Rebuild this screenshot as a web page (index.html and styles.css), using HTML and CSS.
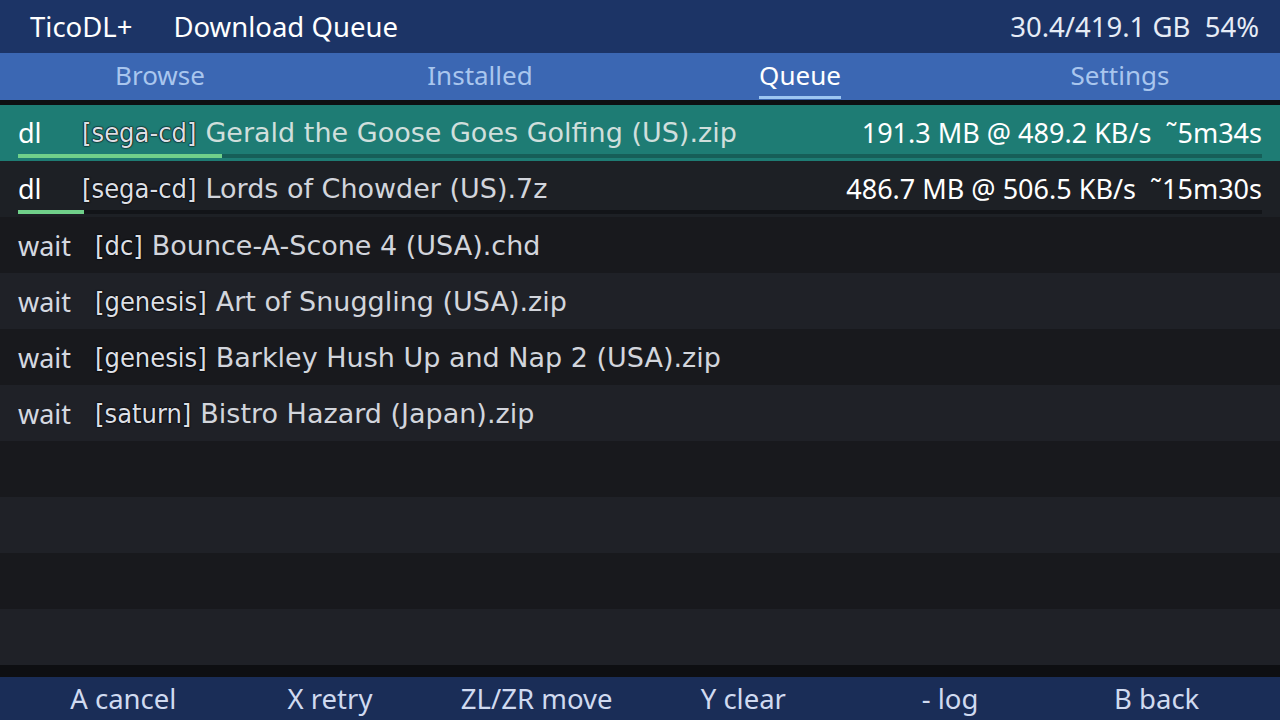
FILE: index.html
```html
<!DOCTYPE html>
<html lang="en">
<head>
  <meta charset="UTF-8" />
  <meta name="viewport" content="width=device-width, initial-scale=1.0">
  <title>TicoDL+ Download Queue</title>
  <link rel="stylesheet" href="styles.css">
</head>
<body>

<div id="app">
  <div class="topbar">
    <span class="brand">TicoDL+</span>
    <span class="title">Download Queue</span>
    <span class="storage">30.4/419.1 GB&nbsp;&nbsp;54%</span>
  </div>

  <div class="tabs">
    <div class="tab"><span>Browse</span></div>
    <div class="tab"><span>Installed</span></div>
    <div class="tab active"><span>Queue</span></div>
    <div class="tab"><span>Settings</span></div>
  </div>
  <div class="divider"></div>

  <div class="queue">
    <div class="row dl selected">
      <div class="line">
        <span class="status st-dl">dl</span>
        <span class="tag">[sega-cd]</span>
        <span class="name">Gerald the Goose Goes Golfing (US).zip</span>
        <span class="stats">191.3 MB @ 489.2 KB/s&nbsp;&nbsp;˜5m34s</span>
      </div>
      <div class="bar"><div class="fill" style="width: 16.4%"></div></div>
    </div>
    <div class="row dl">
      <div class="line">
        <span class="status st-dl">dl</span>
        <span class="tag">[sega-cd]</span>
        <span class="name">Lords of Chowder (US).7z</span>
        <span class="stats">486.7 MB @ 506.5 KB/s&nbsp;&nbsp;˜15m30s</span>
      </div>
      <div class="bar"><div class="fill" style="width: 5.3%"></div></div>
    </div>
    <div class="row">
      <div class="line">
        <span class="status st-wait">wait</span>
        <span class="tag">[dc]</span>
        <span class="name">Bounce-A-Scone 4 (USA).chd</span>
      </div>
    </div>
    <div class="row">
      <div class="line">
        <span class="status st-wait">wait</span>
        <span class="tag">[genesis]</span>
        <span class="name">Art of Snuggling (USA).zip</span>
      </div>
    </div>
    <div class="row">
      <div class="line">
        <span class="status st-wait">wait</span>
        <span class="tag">[genesis]</span>
        <span class="name">Barkley Hush Up and Nap 2 (USA).zip</span>
      </div>
    </div>
    <div class="row">
      <div class="line">
        <span class="status st-wait">wait</span>
        <span class="tag">[saturn]</span>
        <span class="name">Bistro Hazard (Japan).zip</span>
      </div>
    </div>
    <div class="row"></div>
    <div class="row"></div>
    <div class="row"></div>
    <div class="row"></div>
  </div>

  <div class="footer">
    <div class="hint">A cancel</div>
    <div class="hint">X retry</div>
    <div class="hint">ZL/ZR move</div>
    <div class="hint">Y clear</div>
    <div class="hint">- log</div>
    <div class="hint">B back</div>
  </div>
</div>

</body>
</html>
```

FILE: styles.css
```css
* { margin: 0; padding: 0; box-sizing: border-box; }
html, body {
  height: 100%;
  overflow: hidden;
  background: #0e0f12;
  font-family: "Noto Sans", sans-serif;
}

#app {
  width: 1280px;
  height: 720px;
  display: flex;
  flex-direction: column;
  background: #0e0f12;
}

.topbar {
  height: 53px;
  background: #1c3466;
  display: flex;
  align-items: center;
  padding: 0 21px 0 30px;
  color: #fff;
  font-size: 27.5px;
}
.topbar .title { margin-left: 41px; }
.topbar .storage { margin-left: auto; color: #e6ecf6; }

.tabs {
  height: 47px;
  background: #3b67b3;
  display: grid;
  grid-template-columns: repeat(4, 1fr);
}
.tab {
  display: flex;
  justify-content: center;
  align-items: flex-start;
  padding-top: 4px;
  color: #a9c6ee;
  font-size: 26px;
  line-height: 36px;
}
.tab span { padding-bottom: 3px; border-bottom: 3px solid transparent; }
.tab.active { color: #fff; }
.tab.active span { border-bottom-color: #9cc6f2; }

.divider { height: 5px; background: #0e0f12; }

.queue { display: flex; flex-direction: column; }

.row {
  height: 56px;
  padding: 0 18px;
  background: #1f2127;
}
.row:nth-child(odd) { background: #18191d; }
.row:nth-child(2) { background: #1d2025; }
.row.selected { background: #1e7c74; }

.line {
  height: 56px;
  display: flex;
  align-items: center;
  white-space: nowrap;
}
.row.dl .line { height: 49px; padding-top: 6px; }

.status {
  font-family: "Noto Sans", sans-serif;
  font-size: 27px;
  color: #d4d8e0;
}
.st-dl { width: 64px; color: #fff; }
.st-wait { width: 77px; }

.tag {
  font-family: "DejaVu Sans Condensed", "DejaVu Sans", sans-serif;
  font-size: 27px;
  color: #dcdfe5;
  text-shadow: 0 0 2px #000, 0 0 1px #000, 0 0 1px #000;
  margin-right: 9px;
}

.name {
  font-family: "DejaVu Sans", sans-serif;
  font-size: 27px;
  color: #d2d5dc;
}
.selected .name { color: #d0dfdc; }

.stats {
  margin-left: auto;
  font-size: 27px;
  color: #fff;
}

.bar {
  height: 4px;
  background: #121418;
}
.selected .bar { background: #165e58; }
.fill {
  height: 100%;
  background: #70d08a;
}

.footer {
  margin-top: auto;
  height: 43px;
  background: #1a2d57;
  display: grid;
  grid-template-columns: repeat(6, 1fr);
  padding: 0 20px;
}
.hint {
  display: flex;
  justify-content: center;
  align-items: center;
  color: #d0daf0;
  font-size: 27.5px;
}
```
